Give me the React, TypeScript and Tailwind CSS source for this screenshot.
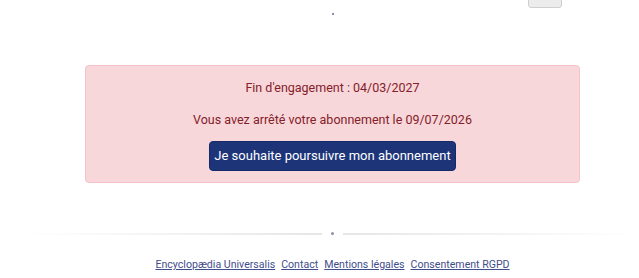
const links = ['Encyclopædia Universalis', 'Contact', 'Mentions légales', 'Consentement RGPD']

export default function App() {
  return (
    <div className="relative h-[278px] w-[639px] overflow-hidden bg-white" style={{ fontFamily: 'Roboto, "Liberation Sans", sans-serif' }}>
      {/* bouton tronqué en haut */}
      <div className="absolute right-[77px] top-[-6px] h-[14px] w-[34px] rounded-[3px] border border-[#cfcfcf] bg-[#ececec]" />

      <div className="flex flex-col items-center pl-[26px]">
        <div className="mt-[13px] h-[2px] w-[2px] rounded-full bg-[#5a6a8a]" />

        {/* Alerte fin d'engagement */}
        <div className="mt-[50px] flex w-[495px] flex-col items-center rounded-[4px] border border-[#f5c2c7] bg-[#f8d7da] pb-[11px] pt-[13px] text-[12.5px] text-[#842029]">
          <p className="leading-[18px]">Fin d'engagement : 04/03/2027</p>
          <p className="mt-[14px] leading-[18px]">Vous avez arrêté votre abonnement le 09/07/2026</p>
          <button
            type="button"
            className="mt-[12px] h-[30px] w-[247px] rounded-[4px] border border-[#16296a] bg-[#1d3479] text-[13px] text-white"
          >
            Je souhaite poursuivre mon abonnement
          </button>
        </div>
      </div>

      {/* Séparateur */}
      <div className="ml-[25px] mt-[49px] flex items-center">
        <div className="h-[2px] flex-1 bg-gradient-to-r from-white to-[#e6e6e6]" />
        <div className="mx-[9px] h-[3px] w-[3px] rounded-full bg-[#8a93a6]" />
        <div className="h-[2px] flex-1 bg-gradient-to-l from-white to-[#e6e6e6]" />
      </div>

      {/* Footer */}
      <div className="mt-[22px] flex justify-center gap-[6px] pl-[26px] text-[10.6px]">
        {links.map((l) => (
          <a key={l} href="#" className="text-[#3f4d8c] underline">
            {l}
          </a>
        ))}
      </div>
    </div>
  )
}
